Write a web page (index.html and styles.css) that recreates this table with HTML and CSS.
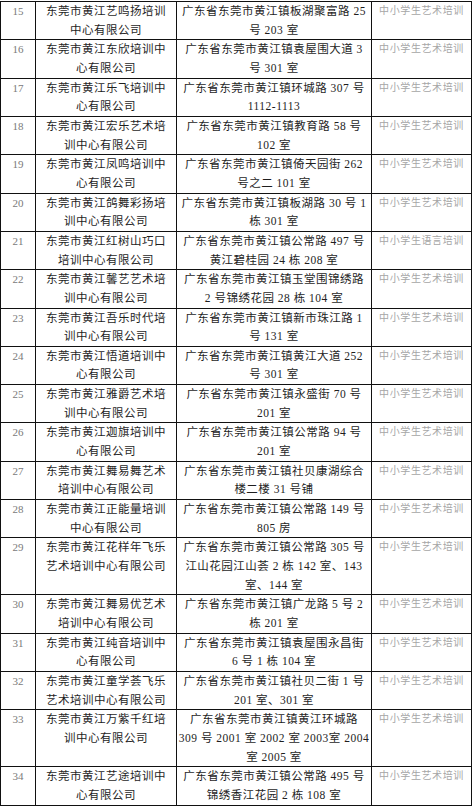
FILE: index.html
```html
<!DOCTYPE html>
<html lang="zh-CN">
<head>
<meta charset="utf-8">
<title>培训机构名单</title>
<link rel="stylesheet" href="styles.css">
</head>
<body>
<table class="list">
<colgroup>
<col class="c-no"><col class="c-name"><col class="c-addr"><col class="c-cat">
</colgroup>
<tbody>
<tr><td class="no">15</td><td class="name">东莞市黄江艺鸣扬培训<br>中心有限公司</td><td class="addr">广东省东莞市黄江镇板湖聚富路 25<br>号 203 室</td><td class="cat">中小学生艺术培训</td></tr>
<tr><td class="no">16</td><td class="name">东莞市黄江东欣培训中<br>心有限公司</td><td class="addr">广东省东莞市黄江镇袁屋围大道 3<br>号 301 室</td><td class="cat">中小学生艺术培训</td></tr>
<tr><td class="no">17</td><td class="name">东莞市黄江乐飞培训中<br>心有限公司</td><td class="addr">广东省东莞市黄江镇环城路 307 号<br>1112-1113</td><td class="cat">中小学生艺术培训</td></tr>
<tr><td class="no">18</td><td class="name">东莞市黄江宏乐艺术培<br>训中心有限公司</td><td class="addr">广东省东莞市黄江镇教育路 58 号<br>102 室</td><td class="cat">中小学生艺术培训</td></tr>
<tr><td class="no">19</td><td class="name">东莞市黄江凤鸣培训中<br>心有限公司</td><td class="addr">广东省东莞市黄江镇倚天园街 262<br>号之二 101 室</td><td class="cat">中小学生艺术培训</td></tr>
<tr><td class="no">20</td><td class="name">东莞市黄江鸽舞彩扬培<br>训中心有限公司</td><td class="addr">广东省东莞市黄江镇板湖路 30 号 1<br>栋 301 室</td><td class="cat">中小学生艺术培训</td></tr>
<tr><td class="no">21</td><td class="name">东莞市黄江红树山巧口<br>培训中心有限公司</td><td class="addr">广东省东莞市黄江镇公常路 497 号<br>黄江碧桂园 24 栋 208 室</td><td class="cat">中小学生语言培训</td></tr>
<tr><td class="no">22</td><td class="name">东莞市黄江馨艺艺术培<br>训中心有限公司</td><td class="addr">广东省东莞市黄江镇玉堂围锦绣路<br>2 号锦绣花园 28 栋 104 室</td><td class="cat">中小学生艺术培训</td></tr>
<tr><td class="no">23</td><td class="name">东莞市黄江吾乐时代培<br>训中心有限公司</td><td class="addr">广东省东莞市黄江镇新市珠江路 1<br>号 131 室</td><td class="cat">中小学生艺术培训</td></tr>
<tr><td class="no">24</td><td class="name">东莞市黄江悟道培训中<br>心有限公司</td><td class="addr">广东省东莞市黄江镇黄江大道 252<br>号 301 室</td><td class="cat">中小学生艺术培训</td></tr>
<tr><td class="no">25</td><td class="name">东莞市黄江雅爵艺术培<br>训中心有限公司</td><td class="addr">广东省东莞市黄江镇永盛街 70 号<br>201 室</td><td class="cat">中小学生艺术培训</td></tr>
<tr><td class="no">26</td><td class="name">东莞市黄江迦旗培训中<br>心有限公司</td><td class="addr">广东省东莞市黄江镇公常路 94 号<br>201 室</td><td class="cat">中小学生艺术培训</td></tr>
<tr><td class="no">27</td><td class="name">东莞市黄江舞易舞艺术<br>培训中心有限公司</td><td class="addr">广东省东莞市黄江镇社贝康湖综合<br>楼二楼 31 号铺</td><td class="cat">中小学生艺术培训</td></tr>
<tr><td class="no">28</td><td class="name">东莞市黄江正能量培训<br>中心有限公司</td><td class="addr">广东省东莞市黄江镇公常路 149 号<br>805 房</td><td class="cat">中小学生艺术培训</td></tr>
<tr><td class="no">29</td><td class="name">东莞市黄江花样年飞乐<br>艺术培训中心有限公司</td><td class="addr">广东省东莞市黄江镇公常路 305 号<br>江山花园江山荟 2 栋 142 室、143<br>室、144 室</td><td class="cat">中小学生艺术培训</td></tr>
<tr><td class="no">30</td><td class="name">东莞市黄江舞易优艺术<br>培训中心有限公司</td><td class="addr">广东省东莞市黄江镇广龙路 5 号 2<br>栋 201 室</td><td class="cat">中小学生艺术培训</td></tr>
<tr><td class="no">31</td><td class="name">东莞市黄江纯音培训中<br>心有限公司</td><td class="addr">广东省东莞市黄江镇袁屋围永昌街<br>6 号 1 栋 104 室</td><td class="cat">中小学生艺术培训</td></tr>
<tr><td class="no">32</td><td class="name">东莞市黄江童学荟飞乐<br>艺术培训中心有限公司</td><td class="addr">广东省东莞市黄江镇社贝二街 1 号<br>201 室、301 室</td><td class="cat">中小学生艺术培训</td></tr>
<tr><td class="no">33</td><td class="name">东莞市黄江万紫千红培<br>训中心有限公司</td><td class="addr">广东省东莞市黄江镇黄江环城路<br>309 号 2001 室 2002 室 2003室 2004<br>室 2005 室</td><td class="cat">中小学生艺术培训</td></tr>
<tr><td class="no">34</td><td class="name">东莞市黄江艺途培训中<br>心有限公司</td><td class="addr">广东省东莞市黄江镇公常路 495 号<br>锦绣香江花园 2 栋 108 室</td><td class="cat">中小学生艺术培训</td></tr>
</tbody>
</table>
</body>
</html>
```
FILE: styles.css
```css
html, body {
  margin: 0;
  padding: 0;
  background: #ffffff;
}
body {
  padding-top: 1px;
}
.list {
  border-collapse: collapse;
  table-layout: fixed;
  width: 471px;
  font-family: "Liberation Serif", "Noto Sans CJK SC", serif;
  color: #1e1e1e;
}
.c-no { width: 35px; }
.c-name { width: 141px; }
.c-addr { width: 195px; }
.c-cat { width: 100px; }
.list td {
  border: 1px solid #111;
  padding: 0;
  vertical-align: top;
  line-height: 18.65px;
  white-space: nowrap;
  overflow: hidden;
}
.no {
  font-size: 11px;
  color: #7a7a7a;
  text-align: center;
  padding-top: 1px;
}
.name, .addr {
  font-size: 11.5px;
  letter-spacing: 0.5px;
  text-align: center;
}
.cat {
  font-size: 10px;
  letter-spacing: 0.6px;
  color: #a6a6a6;
  text-align: center;
}
```
